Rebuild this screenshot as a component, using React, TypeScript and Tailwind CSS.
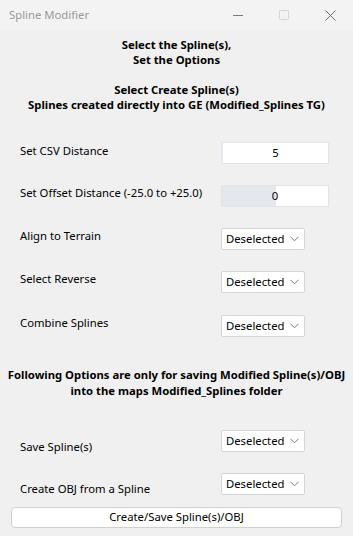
import React from "react";

const font = { fontFamily: '"Noto Sans", "Open Sans", sans-serif' };

function Dropdown() {
  return (
    <div className="flex h-[22px] w-[84px] shrink-0 items-center justify-between rounded-[2px] border border-[#d6d6d6] bg-white pl-[4px] pr-[5px] text-[11.3px] text-black">
      <span>Deselected</span>
      <svg width="9" height="6" viewBox="0 0 9 6" fill="none">
        <path d="M0.5 0.8 L4.5 4.8 L8.5 0.8" stroke="#7a7a7a" strokeWidth="1" />
      </svg>
    </div>
  );
}

function Row({
  label,
  children,
  labelOffset,
  mt,
}: {
  label: string;
  children: React.ReactNode;
  labelOffset: string;
  mt: string;
}) {
  return (
    <div className={`flex h-[22px] items-start justify-between pl-[20px] pr-[24px] ${mt}`}>
      <span className={`whitespace-nowrap text-[11.3px] leading-[15px] text-black ${labelOffset}`}>{label}</span>
      {children}
    </div>
  );
}

export default function App() {
  return (
    <div className="h-[536px] w-[353px] overflow-hidden bg-[#f0f0f0]" style={font}>
      {/* Title bar */}
      <div className="flex h-[30px] items-center justify-between bg-[#f3f3f3] pl-[9px]">
        <span className="text-[11.3px] text-[#9a9a9a]">Spline Modifier</span>
        <div className="flex h-full items-center">
          <div className="flex w-[46px] items-center justify-center">
            <svg width="10" height="10" viewBox="0 0 10 10">
              <path d="M0 5.5 H10" stroke="#7a7a7a" strokeWidth="1" />
            </svg>
          </div>
          <div className="flex w-[46px] items-center justify-center">
            <svg width="10" height="10" viewBox="0 0 10 10">
              <rect x="0.5" y="0.5" width="9" height="9" rx="1" fill="none" stroke="#d4d4d4" strokeWidth="1" />
            </svg>
          </div>
          <div className="flex w-[46px] items-center justify-center">
            <svg width="11" height="11" viewBox="0 0 11 11">
              <path d="M0.5 0.5 L10.5 10.5 M10.5 0.5 L0.5 10.5" stroke="#6e6e6e" strokeWidth="1" />
            </svg>
          </div>
        </div>
      </div>

      {/* Header text */}
      <div className="mt-[7px] flex flex-col items-center whitespace-nowrap text-[11.3px] font-bold leading-[15px] text-black">
        <p>Select the Spline(s),</p>
        <p>Set the Options</p>
        <p className="mt-[15px]">Select Create Spline(s)</p>
        <p>Splines created directly into GE (Modified_Splines TG)</p>
      </div>

      {/* Options */}
      <Row label="Set CSV Distance" labelOffset="mt-[1px]" mt="mt-[30px]">
        <div className="flex h-[22px] w-[108px] items-center justify-center border border-[#e3e3e3] border-l-[2px] border-l-[#e6e9ef] bg-white text-[11.3px] text-black">
          5
        </div>
      </Row>
      <Row label="Set Offset Distance (-25.0 to +25.0)" labelOffset="mt-[0px]" mt="mt-[21px]">
        <div className="relative flex h-[22px] w-[108px] items-center justify-center overflow-hidden border border-[#e3e3e3] bg-white text-[11.3px] text-black">
          <div className="absolute inset-y-0 left-0 w-[54px] bg-[#e4e7ee]" />
          <span className="relative">0</span>
        </div>
      </Row>
      <Row label="Align to Terrain" labelOffset="mt-[0px]" mt="mt-[21px]">
        <div className="mr-[24px]">
          <Dropdown />
        </div>
      </Row>
      <Row label="Select Reverse" labelOffset="mt-[0px]" mt="mt-[21px]">
        <div className="mr-[24px]">
          <Dropdown />
        </div>
      </Row>
      <Row label="Combine Splines" labelOffset="mt-[0px]" mt="mt-[22px]">
        <div className="mr-[24px]">
          <Dropdown />
        </div>
      </Row>

      {/* Section 2 text */}
      <div className="mt-[30px] flex flex-col items-center whitespace-nowrap text-[11.3px] font-bold leading-[16px] text-black">
        <p>Following Options are only for saving Modified Spline(s)/OBJ</p>
        <p>into the maps Modified_Splines folder</p>
      </div>

      <Row label="Save Spline(s)" labelOffset="mt-[9px]" mt="mt-[31px]">
        <div className="mr-[24px]">
          <Dropdown />
        </div>
      </Row>
      <Row label="Create OBJ from a Spline" labelOffset="mt-[8px]" mt="mt-[21px]">
        <div className="mr-[24px]">
          <Dropdown />
        </div>
      </Row>

      <div className="mt-[12px] px-[11px]">
        <button className="flex h-[21px] w-[331px] items-center justify-center rounded-[4px] border border-[#d0d0d0] bg-white text-[11.3px] text-black">
          Create/Save Spline(s)/OBJ
        </button>
      </div>
    </div>
  );
}
